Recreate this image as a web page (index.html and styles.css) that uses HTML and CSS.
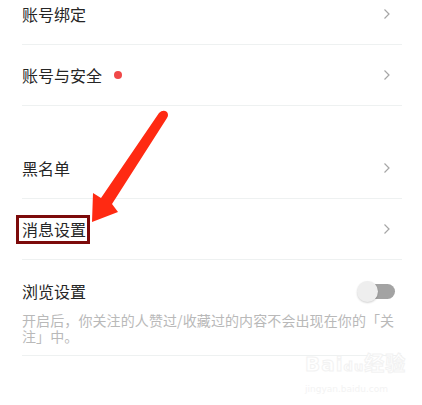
FILE: index.html
```html
<!DOCTYPE html>
<html lang="zh">
<head>
<meta charset="utf-8">
<link rel="stylesheet" href="styles.css">
</head>
<body>
<div class="page">
  <div class="list">
    <div class="row">
      <span class="label">账号绑定</span>
      <svg class="chev" viewBox="0 0 8 12" width="8" height="12"><path d="M1.5 1.5 L6 6 L1.5 10.5" fill="none" stroke="#a6a6a6" stroke-width="1.2"/></svg>
    </div>
    <div class="row">
      <span class="label">账号与安全<span class="dot"></span></span>
      <svg class="chev" viewBox="0 0 8 12" width="8" height="12"><path d="M1.5 1.5 L6 6 L1.5 10.5" fill="none" stroke="#a6a6a6" stroke-width="1.2"/></svg>
    </div>
  </div>
  <div class="list gap">
    <div class="row">
      <span class="label">黑名单</span>
      <svg class="chev" viewBox="0 0 8 12" width="8" height="12"><path d="M1.5 1.5 L6 6 L1.5 10.5" fill="none" stroke="#a6a6a6" stroke-width="1.2"/></svg>
    </div>
    <div class="row">
      <span class="label boxed">消息设置</span>
      <svg class="chev" viewBox="0 0 8 12" width="8" height="12"><path d="M1.5 1.5 L6 6 L1.5 10.5" fill="none" stroke="#a6a6a6" stroke-width="1.2"/></svg>
    </div>
    <div class="row tall">
      <div class="head">
        <span class="label">浏览设置</span>
        <span class="toggle"><span class="knob"></span></span>
      </div>
      <p class="desc">开启后，你关注的人赞过/收藏过的内容不会出现在你的「关注」中。</p>
    </div>
  </div>
  <svg class="arrow" viewBox="0 0 422 405" width="422" height="405">
    <path d="M159 113 Q163 109 167 112 Q169 115 167 118 L112 204 L118 212 L92 222 L93 193 L101 198 Z" fill="#ff2a12"/>
  </svg>
  <div class="mark">
    <div class="mark-logo">Bai<span class="paw">du</span>经验</div>
    <div class="mark-url">jingyan.baidu.com</div>
  </div>
</div>
</body>
</html>
```
FILE: styles.css
```css
html, body {
  margin: 0;
  padding: 0;
  background: #ffffff;
}
.page {
  position: relative;
  width: 422px;
  height: 405px;
  overflow: hidden;
  font-family: "Noto Sans CJK SC", "Noto Sans", sans-serif;
}
.list {
  padding: 0 20px 0 22px;
}
.list:first-child {
  margin-top: -16px;
}
.gap {
  margin-top: 32px;
}
.row {
  display: flex;
  align-items: center;
  justify-content: space-between;
  height: 60px;
  border-bottom: 1px solid #eef1f1;
}
.label {
  position: relative;
  font-size: 16px;
  line-height: 22px;
  color: #262626;
  display: inline-flex;
  align-items: center;
}
.dot {
  width: 8px;
  height: 8px;
  border-radius: 50%;
  background: #f04848;
  margin-left: 12px;
}
.chev {
  margin-right: 11px;
}
.boxed::after {
  content: "";
  position: absolute;
  left: -6px;
  right: -4px;
  top: -3px;
  bottom: -4px;
  border: 3px solid #7c0a0a;
}
.row.tall {
  display: block;
  height: auto;
  padding: 20px 0 11px;
}
.head {
  display: flex;
  align-items: center;
  justify-content: space-between;
}
.toggle {
  position: relative;
  width: 34px;
  height: 15px;
  border-radius: 8px;
  background: #a3a3a3;
  margin-right: 7px;
}
.knob {
  position: absolute;
  left: -4px;
  top: -3px;
  width: 21px;
  height: 21px;
  border-radius: 50%;
  background: #eeeeee;
  box-shadow: 0 1px 2px rgba(0,0,0,0.18);
}
.desc {
  margin: 10px -6px 0 0;
  font-size: 14px;
  letter-spacing: 0.1px;
  line-height: 16px;
  color: #b9b9b9;
}
.arrow {
  position: absolute;
  left: 0;
  top: 0;
}
.mark {
  position: absolute;
  left: 305px;
  top: 350px;
  font-family: "DejaVu Sans", "Noto Sans CJK SC", sans-serif;
}
.mark-logo {
  font-size: 20px;
  font-weight: bold;
  line-height: 28px;
  letter-spacing: 1px;
  -webkit-text-stroke: 1px #f2f2f2;
  color: #ffffff;
}
.paw {
  font-size: 13px;
}
.mark-url {
  font-size: 9px;
  line-height: 12px;
  color: #f3f3f3;
  margin-top: 2px;
}
```
